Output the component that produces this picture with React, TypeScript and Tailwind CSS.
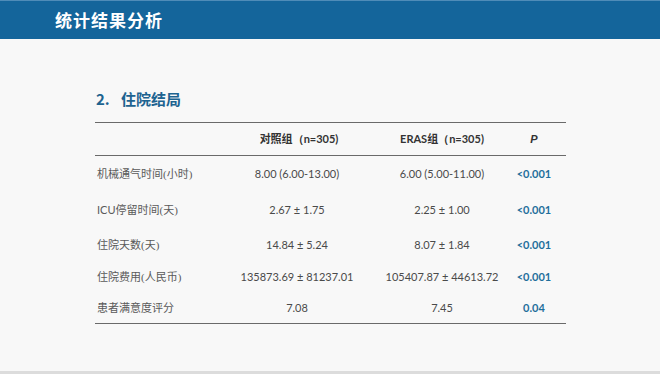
const rows = [
  { label: "机械通气时间(小时)", a: "8.00 (6.00-13.00)", b: "6.00 (5.00-11.00)", p: "<0.001", h: "h-[36px]" },
  { label: "停留时间(天)", pre: "ICU", a: "2.67 ± 1.75", b: "2.25 ± 1.00", p: "<0.001", h: "h-[37px]" },
  { label: "住院天数(天)", a: "14.84 ± 5.24", b: "8.07 ± 1.84", p: "<0.001", h: "h-[32px]" },
  { label: "住院费用(人民币)", a: "135873.69 ± 81237.01", b: "105407.87 ± 44613.72", p: "<0.001", h: "h-[33px]" },
  { label: "患者满意度评分", a: "7.08", b: "7.45", p: "0.04", h: "h-[29px]" },
];

const cjkSerif = "font-['Liberation_Serif','Noto_Sans_CJK_SC',serif]";
const num = "font-['Lato','Open_Sans',sans-serif]";

export default function App() {
  return (
    <div className="w-[660px] h-[374px] bg-[#f8f8f8] flex flex-col overflow-hidden">
      {/* Header band */}
      <div className="h-[1px] bg-[#4f8cb8]" />
      <header className="h-[38px] bg-[#14659b] flex items-center pl-[55px]">
        <span className="text-white text-[17px] font-bold tracking-[1px] font-['Noto_Sans_CJK_SC',sans-serif]">
          统计结果分析
        </span>
      </header>

      <main className="flex-1 flex flex-col pl-[95px]">
        <h2 className="mt-[49px] h-[22px] flex items-center text-[#1d6390] text-[15px] font-bold font-['Noto_Sans_CJK_SC',sans-serif]">
          <span className="ml-[1px] w-[25px]">2.</span>
          <span>住院结局</span>
        </h2>

        <div className="mt-[12px] w-[471px] flex flex-col">
          <div className="h-[1px] bg-[#6a6a6a]" />
          <div className="h-[32px] grid grid-cols-[130px_144px_146px_38px_13px] items-center text-[#333] text-[11px] font-bold">
            <span />
            <span className="text-center pl-[4px]">
              <span className={cjkSerif}>对照组</span>
              <span className={num}>（n=305)</span>
            </span>
            <span className={`text-center ${num}`}>
              ERAS<span className={cjkSerif}>组</span>（n=305)
            </span>
            <span className="text-center italic font-['Liberation_Sans',sans-serif]">P</span>
            <span />
          </div>
          <div className="h-[1px] bg-[#6a6a6a]" />

          {rows.map((r) => (
            <div
              key={r.label}
              className={`${r.h} grid grid-cols-[130px_144px_146px_38px_13px] items-center text-[11px] text-[#4a4a4a]`}
            >
              <span className={`pl-[2px] ${cjkSerif} text-[#5a5a5a]`}>
                {r.pre && <span className={num}>{r.pre}</span>}
                {r.label}
              </span>
              <span className={`text-center ${num}`}>{r.a}</span>
              <span className={`text-center ${num}`}>{r.b}</span>
              <span className={`text-center font-bold text-[#1f6f9c] ${num}`}>{r.p}</span>
              <span />
            </div>
          ))}
          <div className="h-[1px] bg-[#6a6a6a]" />
        </div>
      </main>
      <div className="h-[3px] bg-[#dcdcdc]" />
    </div>
  );
}
